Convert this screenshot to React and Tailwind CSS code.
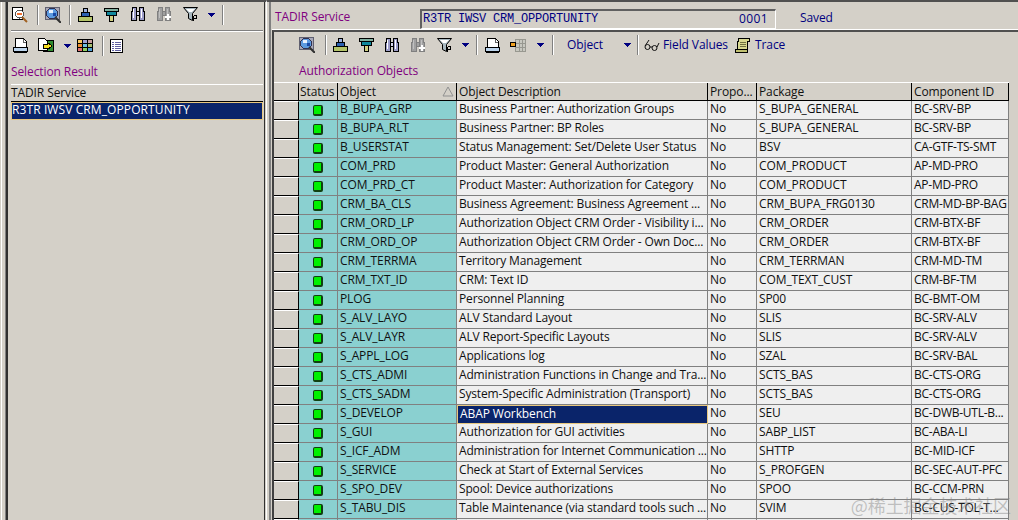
import React from 'react';

const rows = [
  ['B_BUPA_GRP', 'Business Partner: Authorization Groups', 'S_BUPA_GENERAL', 'BC-SRV-BP'],
  ['B_BUPA_RLT', 'Business Partner: BP Roles', 'S_BUPA_GENERAL', 'BC-SRV-BP'],
  ['B_USERSTAT', 'Status Management: Set/Delete User Status', 'BSV', 'CA-GTF-TS-SMT'],
  ['COM_PRD', 'Product Master: General Authorization', 'COM_PRODUCT', 'AP-MD-PRO'],
  ['COM_PRD_CT', 'Product Master: Authorization for Category', 'COM_PRODUCT', 'AP-MD-PRO'],
  ['CRM_BA_CLS', 'Business Agreement: Business Agreement ...', 'CRM_BUPA_FRG0130', 'CRM-MD-BP-BAG'],
  ['CRM_ORD_LP', 'Authorization Object CRM Order - Visibility i...', 'CRM_ORDER', 'CRM-BTX-BF'],
  ['CRM_ORD_OP', 'Authorization Object CRM Order - Own Doc...', 'CRM_ORDER', 'CRM-BTX-BF'],
  ['CRM_TERRMA', 'Territory Management', 'CRM_TERRMAN', 'CRM-MD-TM'],
  ['CRM_TXT_ID', 'CRM: Text ID', 'COM_TEXT_CUST', 'CRM-BF-TM'],
  ['PLOG', 'Personnel Planning', 'SP00', 'BC-BMT-OM'],
  ['S_ALV_LAYO', 'ALV Standard Layout', 'SLIS', 'BC-SRV-ALV'],
  ['S_ALV_LAYR', 'ALV Report-Specific Layouts', 'SLIS', 'BC-SRV-ALV'],
  ['S_APPL_LOG', 'Applications log', 'SZAL', 'BC-SRV-BAL'],
  ['S_CTS_ADMI', 'Administration Functions in Change and Tra...', 'SCTS_BAS', 'BC-CTS-ORG'],
  ['S_CTS_SADM', 'System-Specific Administration (Transport)', 'SCTS_BAS', 'BC-CTS-ORG'],
  ['S_DEVELOP', 'ABAP Workbench', 'SEU', 'BC-DWB-UTL-B...'],
  ['S_GUI', 'Authorization for GUI activities', 'SABP_LIST', 'BC-ABA-LI'],
  ['S_ICF_ADM', 'Administration for Internet Communication ...', 'SHTTP', 'BC-MID-ICF'],
  ['S_SERVICE', 'Check at Start of External Services', 'S_PROFGEN', 'BC-SEC-AUT-PFC'],
  ['S_SPO_DEV', 'Spool: Device authorizations', 'SPOO', 'BC-CCM-PRN'],
  ['S_TABU_DIS', 'Table Maintenance (via standard tools such ...', 'SVIM', 'BC-CUS-TOL-T...'],
  ['', '', '', ''],
];

const Svg = ({ w = 16, h = 16, children }) => (
  <svg width={w} height={h} viewBox={`0 0 ${w} ${h}`} shapeRendering="crispEdges" className="shrink-0">
    {children}
  </svg>
);

const Sep = () => (
  <div className="w-[2px] h-[20px] bg-white border-l border-[#808080] shrink-0" />
);

const Arrow = () => (
  <svg width="7" height="4" viewBox="0 0 7 4" shapeRendering="crispEdges" className="shrink-0">
    <path d="M0 0h7v1h-1v1h-1v1h-1v1h-1v-1h-1v-1h-1v-1h-1z" fill="#000080" />
  </svg>
);

const DocSearch = () => (
  <Svg>
    <rect x="0.5" y="0.5" width="10" height="12" fill="#fff" stroke="#000" />
    <circle cx="7.5" cy="7" r="4" fill="#fff" stroke="#555" />
    <rect x="5" y="6" width="5" height="2" fill="#f07030" />
    <path d="M10 10l5 5" stroke="#a06020" strokeWidth="2" shapeRendering="auto" />
  </Svg>
);

const GlobeSearch = () => (
  <Svg>
    <rect x="0.5" y="0.5" width="14" height="12" fill="#a8a8b8" stroke="#606070" />
    <circle cx="7" cy="6.5" r="5.5" fill="#5c9ae0" stroke="#303050" />
    <rect x="4" y="3" width="4" height="3" fill="#e8f0ff" />
    <rect x="8" y="6" width="3" height="3" fill="#1848a8" />
    <path d="M10 10l6 6" stroke="#303030" strokeWidth="2" shapeRendering="auto" />
  </Svg>
);

const Pyramid = () => (
  <Svg w={15} h={14}>
    <rect x="5.5" y="0.5" width="4" height="4" fill="#9cb0e0" stroke="#000" />
    <rect x="3.5" y="4.5" width="8" height="4" fill="#2c60b0" stroke="#000" />
    <rect x="0.5" y="8.5" width="14" height="5" fill="#b4c468" stroke="#000" />
  </Svg>
);

const Filter = () => (
  <Svg w={15} h={14}>
    <rect x="0.5" y="0.5" width="14" height="3" fill="#80b0a0" stroke="#000" />
    <rect x="2.5" y="3.5" width="10" height="4" fill="#10889c" stroke="#000" />
    <rect x="5.5" y="7.5" width="4" height="6" fill="#d0d080" stroke="#000" />
  </Svg>
);

const Binoculars = ({ disabled }) => {
  const stroke = disabled ? '#808080' : '#000';
  const fill = disabled ? '#a0a0a0' : '#9c9cc8';
  return (
    <Svg w={16} h={15}>
      <path d="M2.5 0.5h4v13h-5v-9h1z" fill={fill} stroke={stroke} />
      <path d="M9.5 0.5h4v4h1v9h-5z" fill={fill} stroke={stroke} />
      <rect x="6.5" y="4.5" width="3" height="4" fill={disabled ? '#a0a0a0' : '#d8d8f0'} stroke={stroke} />
      <rect x="3" y="2" width="1" height="9" fill={disabled ? '#c0c0c0' : '#fff'} />
      <rect x="11" y="2" width="1" height="9" fill={disabled ? '#c0c0c0' : '#fff'} />
      {disabled && <path d="M9 10h6M12 7v6" stroke="#fff" strokeWidth="2" />}
    </Svg>
  );
};

const Funnel = () => (
  <Svg w={15} h={15}>
    <path d="M0.5 0.5h14l-5 6v7l-4-2v-5z" fill="#a8b8c0" stroke="#000" shapeRendering="auto" />
    <path d="M3 2h9l-3 3h-3z" fill="#fff" shapeRendering="auto" />
    <path d="M10.5 8.5v5M10.5 8.5h3v3h-3" fill="none" stroke="#000" />
  </Svg>
);

const Printer = () => (
  <Svg w={15} h={15}>
    <path d="M2.5 0.5h8l3 3v6h-11z" fill="#fff" stroke="#000" />
    <path d="M10 1v3h3" fill="none" stroke="#606060" />
    <rect x="0.5" y="9.5" width="14" height="4" fill="#bcd4ec" stroke="#000" />
    <rect x="1" y="14" width="13" height="1" fill="#000" />
  </Svg>
);

const DocExport = () => (
  <Svg w={16} h={15}>
    <rect x="5.5" y="2.5" width="10" height="11" fill="#308c30" stroke="#000" />
    <path d="M0.5 0.5h6l3 3v9h-9z" fill="#fff" stroke="#000" />
    <path d="M5 6h4v-2l5 4-5 4v-2h-4z" fill="#f8e020" stroke="#000" />
  </Svg>
);

const ColorGrid = () => (
  <Svg w={16} h={13}>
    <rect width="16" height="13" fill="#000" />
    {['#f8c860', '#a0a0d0', '#c8a0a0', '#f09030', '#70c0e0', '#a8c070', '#e07070', '#90d060', '#50a0d8'].map((c, i) => (
      <rect key={i} x={1 + (i % 3) * 5} y={1 + Math.floor(i / 3) * 4} width="4" height="3" fill={c} />
    ))}
  </Svg>
);

const ListPage = () => (
  <Svg w={13} h={14}>
    <rect x="0.5" y="0.5" width="12" height="13" fill="#fff" stroke="#000" />
    {[3, 5, 7, 9, 11].map((y) => (
      <rect key={y} x="2" y={y} width="9" height="1" fill="#6060a0" />
    ))}
    <rect x="4" y="2" width="1" height="10" fill="#fff" />
  </Svg>
);

const GridOrange = () => (
  <Svg w={16} h={13}>
    <rect x="5.5" y="0.5" width="10" height="12" fill="#c8c8c0" stroke="#989890" />
    <path d="M9 1v11M12 1v11M6 4h9M6 8h9" stroke="#989890" fill="none" />
    <rect x="0.5" y="3.5" width="5" height="4" fill="#f0a020" stroke="#000" />
  </Svg>
);

const Glasses = () => (
  <svg width="16" height="13" viewBox="0 0 16 13" fill="none" stroke="#101010" className="shrink-0">
    <circle cx="3.5" cy="8" r="2.5" />
    <circle cx="10.5" cy="9" r="2.5" />
    <path d="M6 8h2M13 8l2-4M1 7l4-6" />
  </svg>
);

const Scroll = () => (
  <Svg w={15} h={15}>
    <path d="M3.5 0.5h11v3h-2v8h-10v-8h1z" fill="#d8d890" stroke="#000" />
    <rect x="0.5" y="11.5" width="12" height="3" fill="#c0c070" stroke="#000" />
    <path d="M5 4h6M5 6h6M5 8h6" stroke="#707040" />
  </Svg>
);

const Led = () => (
  <div className="w-[10px] h-[11px] mt-[1px] mr-[2px] bg-[#00f000] border border-[#104010] rounded-[2px] border-b-2 border-r-2" />
);

const RowHead = ({ className = 'pl-[2px]', children }) => (
  <div className={`bg-[#d4d0c8] border-r border-r-black border-b border-b-black h-full overflow-hidden whitespace-nowrap ${className}`}>
    {children}
  </div>
);

const Cell = ({ className = '', children }) => (
  <div className={`h-[19px] leading-[16px] pl-[2px] border-r border-b border-[#808080] overflow-hidden whitespace-nowrap ${className}`}>
    {children}
  </div>
);

const gridCols = 'grid grid-cols-[25px_39px_119px_251px_49px_155px_97px] w-[735px]';

export default function App() {
  return (
    <div className="relative w-[1018px] h-[520px] overflow-hidden bg-[#d4d0c8] flex font-['Open_Sans',sans-serif] text-[12px] tracking-[-0.1px] text-[#101010]">
      {/* left pane */}
      <div className="w-[266px] h-full shrink-0 pl-[1px] pr-[1px] border-t-2 border-t-[#505050]">
        <div className="h-full border-l border-white pl-[3px]">
          <div className="h-full border-l border-[#808080]">
            <div className="h-full border-l-2 border-[#303030] border-r border-r-[#303030] pl-[3px] pr-[1px] flex flex-col">
              <div className="h-[25px] flex items-center pl-[1px] shrink-0">
                <DocSearch />
                <div className="w-[9px]" /><Sep /><div className="w-[6px]" />
                <GlobeSearch />
                <div className="w-[8px]" /><Sep /><div className="w-[7px]" />
                <Pyramid />
                <div className="w-[11px]" /><Filter />
                <div className="w-[11px]" /><Binoculars />
                <div className="w-[10px]" /><Binoculars disabled />
                <div className="w-[11px]" /><Funnel />
                <div className="w-[10px]" /><Arrow />
                <div className="w-[7px]" /><Sep />
              </div>
              <div className="h-[2px] mt-[3px] bg-white border-t border-[#808080] shrink-0" />
              <div className="h-[23px] mt-[2px] flex items-center pl-[2px] shrink-0">
                <Printer />
                <div className="w-[10px]" /><DocExport />
                <div className="w-[10px]" /><Arrow />
                <div className="w-[6px]" /><ColorGrid />
                <div className="w-[9px]" /><Sep />
                <div className="w-[6px]" /><ListPage />
              </div>
              <div className="text-[#800080] h-[27px] pt-[7px] leading-[16px] shrink-0 overflow-hidden">Selection Result</div>
              <div className="h-[18px] border-t border-white border-b border-b-black leading-[16px] shrink-0">TADIR Service</div>
              <div className="h-[18px] bg-[#0a246a] text-white border border-[#e8c880] leading-[14px] tracking-[0.1px] shrink-0">R3TR IWSV CRM_OPPORTUNITY</div>
            </div>
          </div>
        </div>
      </div>

      {/* sash */}
      <div className="w-[6px] h-full shrink-0 border-t-2 border-t-[#505050] border-l border-l-white pl-[2px]">
        <div className="w-[2px] h-full bg-[#808080]" />
      </div>

      {/* right pane */}
      <div className="flex-1 h-full min-w-0 border-t-2 border-t-[#505050] flex flex-col">
        <div className="h-[26px] shrink-0 flex items-center pl-[3px] relative">
          <div className="w-[145px] text-[#800080] mt-[4px]">TADIR Service</div>
          <div className="w-[356px] h-[20px] mt-[7px] border-t-2 border-l-2 border-t-[#606060] border-l-[#606060] border-r border-b border-white flex items-center pl-[1px] text-[#000080] font-['Liberation_Mono',monospace] text-[12px] tracking-[-0.2px]">
            <span className="w-[316px]">R3TR IWSV CRM_OPPORTUNITY</span>
            <span className="font-['Open_Sans',sans-serif] text-[12px] tracking-[0.4px]">0001</span>
          </div>
          <div className="ml-[24px] text-[#000080] mt-[6px]">Saved</div>
        </div>
        <div className="flex-1 min-h-0 mt-[1px] border-t border-t-white">
          <div className="h-full border-t-2 border-t-[#505050] border-l-2 border-l-[#404040] flex flex-col">
            <div className="h-[22px] mt-[2px] flex items-center pl-[25px] shrink-0 text-[#000080]">
              <GlobeSearch />
              <div className="w-[10px]" /><Sep /><div className="w-[6px]" />
              <Pyramid />
              <div className="w-[11px]" /><Filter />
              <div className="w-[10px]" /><Binoculars />
              <div className="w-[10px]" /><Binoculars disabled />
              <div className="w-[11px]" /><Funnel />
              <div className="w-[10px]" /><Arrow />
              <div className="w-[7px]" /><Sep />
              <div className="w-[7px]" /><Printer />
              <div className="w-[10px]" /><GridOrange />
              <div className="w-[11px]" /><Arrow />
              <div className="w-[8px]" /><Sep />
              <span className="ml-[13px] w-[57px]">Object</span>
              <Arrow />
              <div className="w-[6px]" /><Sep />
              <div className="w-[5px]" /><Glasses />
              <span className="ml-[3px] w-[72px] whitespace-nowrap">Field Values</span>
              <Scroll />
              <span className="ml-[5px]">Trace</span>
            </div>
            <div className="h-[26px] pl-[25px] pt-[7px] text-[#800080] leading-[16px] shrink-0">Authorization Objects</div>
            <div className="shrink-0">
              <div className={`${gridCols} h-[19px] border-t border-t-white`}>
                <RowHead />
                <RowHead className="pl-[1px]">Status</RowHead>
                <RowHead className="pl-[2px] relative">
                  Object
                  <svg width="12" height="11" viewBox="0 0 12 11" className="absolute right-[2px] top-[3px]" fill="none" stroke="#909090">
                    <path d="M6 1L1 10h10z" />
                  </svg>
                </RowHead>
                <RowHead>Object Description</RowHead>
                <RowHead>Propo...</RowHead>
                <RowHead>Package</RowHead>
                <RowHead>Component ID</RowHead>
              </div>
              {rows.map(([object, desc, pkg, comp], i) => (
                <div key={i} className={gridCols}>
                  <RowHead className="h-[19px] border-t border-t-white" />
                  <Cell className="bg-[#8ad0d0] flex justify-center items-center pl-0">{object && <Led />}</Cell>
                  <Cell className="bg-[#8ad0d0]">{object}</Cell>
                  {object === 'S_DEVELOP' ? (
                    <Cell className="bg-[#0a246a] text-white border border-[#e8c880] leading-[15px] pl-[1px]">{desc}</Cell>
                  ) : (
                    <Cell className="bg-[#efefef] tracking-[-0.16px]">{desc}</Cell>
                  )}
                  <Cell className="bg-[#efefef]">{object && 'No'}</Cell>
                  <Cell className="bg-[#efefef]">{pkg}</Cell>
                  <Cell className="bg-[#efefef] tracking-[-0.25px]">{comp}</Cell>
                </div>
              ))}
            </div>
          </div>
        </div>
      </div>

      <div className="absolute right-[7px] bottom-[4px] text-[18px] text-[#80808070] font-['Noto_Sans_CJK_SC',sans-serif] leading-[22px]">
        @稀土掘金技术社区
      </div>
    </div>
  );
}
